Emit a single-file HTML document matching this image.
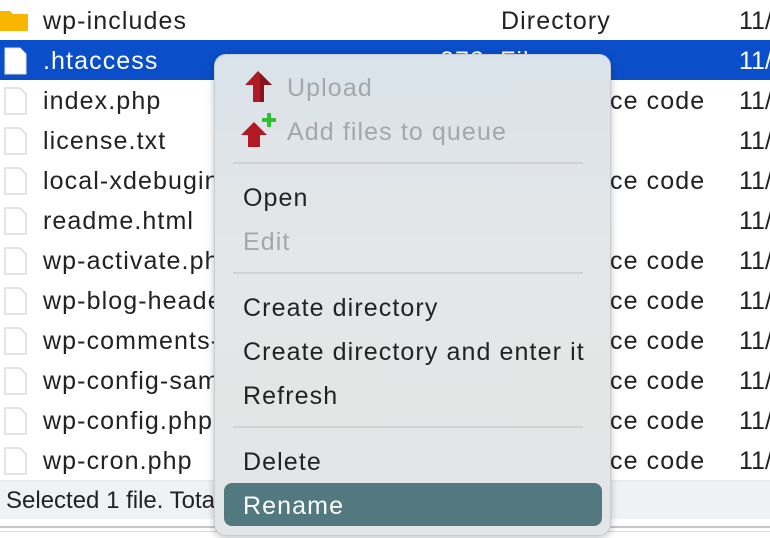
<!DOCTYPE html>
<html><head><meta charset="utf-8"><style>
body{margin:0;width:770px;height:538px;overflow:hidden;background:#fff;font-family:"Liberation Sans",Arial,sans-serif;position:relative}
.row{position:absolute;left:0;width:770px;height:40px;font-size:25px;letter-spacing:1.1px;color:#222}
.row span{position:absolute;top:7px;white-space:nowrap}
.n{left:43px}
.ic{position:absolute;left:4px;top:7px}
.sel{background:#0a4fc9;color:#fff}
.menu{position:absolute;left:214px;top:54px;width:397px;height:482px;border-radius:12px;background:linear-gradient(#d9e2ea,#e4e6e7 40%,#e3e5e6);box-shadow:0 2px 8px rgba(0,0,0,.25);border:1px solid #c8cccf;box-sizing:border-box;letter-spacing:1.1px}
.mi{position:absolute;left:28px;font-size:25px;color:#222;white-space:nowrap}
.dis{color:#a4a7aa}
.sep{position:absolute;left:18px;width:350px;height:2px;background:#cfd1d3}
</style></head><body>
<div class="row" style="top:0"><svg class="ic" style="left:0;top:8px" width="30" height="24"><path d="M0 3h10l3 3h15v17H0z" fill="#f8b600"/></svg><span class="n">wp-includes</span><span style="left:501px">Directory</span><span style="left:739px;letter-spacing:0">11/</span></div>
<div class="row sel" style="top:40px"><svg class="ic" width="24" height="28"><path d="M1 1h15l6 6v20H1z" fill="#fff" stroke="#ddd"/></svg><span class="n">.htaccess</span><span style="left:440px">273</span><span style="left:500px">File</span><span style="left:739px;letter-spacing:0">11/</span></div>
<div id="rows"></div>
<div style="position:absolute;left:0;top:480px;width:770px;height:38px;background:#eef2f2;border-top:1px solid #e6e9ea;font-size:24px;color:#222"><span style="position:absolute;left:6px;top:6px">Selected 1 file. Total size: 273 bytes</span></div>
<div style="position:absolute;left:0;top:526px;width:770px;height:2px;background:#c5c7c8"></div>
<div style="position:absolute;left:0;top:531px;width:770px;height:1px;background:#dcdcdc"></div>
<div class="menu">
<svg style="position:absolute;left:28px;top:15px" width="32" height="34"><path d="M15 1L2 15h8v17h11V15h8z" fill="#b11a24"/><path d="M15 1L29 15h-8v17h-4V3z" fill="#8a121a"/></svg>
<div class="mi dis" style="left:72px;top:19px">Upload</div>
<svg style="position:absolute;left:24px;top:58px" width="42" height="36"><path d="M15 9L2 22h7v12h12V22h7z" fill="#b11a24"/><path d="M23 5h5V0h4v5h5v4h-5v5h-4V9h-5z" fill="#2ec22e"/></svg>
<div class="mi dis" style="left:72px;top:63px">Add files to queue</div>
<div class="sep" style="top:107px"></div>
<div class="mi" style="top:129px">Open</div>
<div class="mi dis" style="top:173px">Edit</div>
<div class="sep" style="top:217px"></div>
<div class="mi" style="top:239px">Create directory</div>
<div class="mi" style="top:283px">Create directory and enter it</div>
<div class="mi" style="top:327px">Refresh</div>
<div class="sep" style="top:371px"></div>
<div class="mi" style="top:393px">Delete</div>
<div style="position:absolute;left:9px;top:428px;width:378px;height:43px;border-radius:8px;background:#51797f"></div>
<div class="mi" style="top:437px;color:#fff">Rename</div>
</div>
<script>
var f=["index.php","license.txt","local-xdebuginfo.php","readme.html","wp-activate.php","wp-blog-header.php","wp-comments-post.php","wp-config-sample.php","wp-config.php","wp-cron.php"];
var t=["ce code","","ce code","","ce code","ce code","ce code","ce code","ce code","ce code"];
var h="";for(var i=0;i<f.length;i++){h+='<div class="row" style="top:'+(80+i*40)+'px"><svg class="ic" width="24" height="28"><path d="M1 1h15l6 6v20H1z" fill="#fff" stroke="#dcdcdc" stroke-width="1.5"/></svg><span class="n">'+f[i]+'</span><span style="left:610px">'+t[i]+'</span><span style="left:739px;letter-spacing:0">11/</span></div>';}
document.getElementById("rows").innerHTML=h;
</script>
</body></html>
